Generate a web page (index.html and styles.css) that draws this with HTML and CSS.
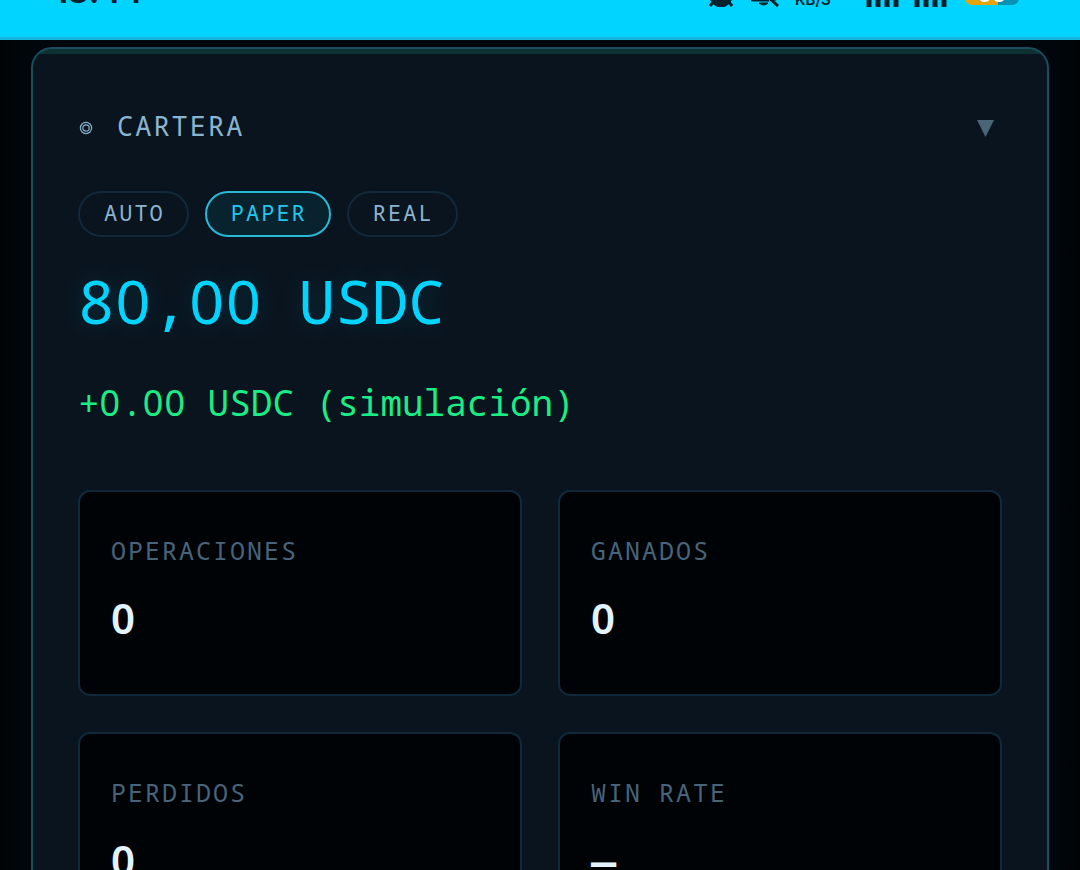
FILE: index.html
```html
<!DOCTYPE html>
<html lang="es">
<head>
<meta charset="utf-8">
<title>Cartera</title>
<link rel="stylesheet" href="styles.css">
</head>
<body>
<div class="screen">
  <header class="status">
    <span class="clock">18:44</span>
    <div class="indicators">
      <svg class="alarm" width="26" height="28" viewBox="0 0 26 28"><circle cx="13" cy="17" r="11"/><path d="M6 22L2 27M20 22l4 5" stroke-width="3"/></svg>
      <svg class="muted" width="30" height="28" viewBox="0 0 30 28"><path d="M1 21h18" stroke-width="3"/><path d="M9 24h9q-4 4-9 0z"/><path d="M17 17l11 10M22 21l6-2" stroke-width="3"/></svg>
      <span class="rate">KB/S</span>
      <svg class="signal" width="34" height="28" viewBox="0 0 34 28"><path d="M4 16v12M13 12v16M22 8v20M31 4v24" stroke-width="5"/></svg>
      <svg class="signal" width="34" height="28" viewBox="0 0 34 28"><path d="M4 16v12M13 12v16M22 8v20M31 4v24" stroke-width="5"/></svg>
      <span class="battery"><span class="level">60</span></span>
    </div>
  </header>
  <main class="page">
    <section class="card">
      <div class="card-head">
        <svg class="target" width="14" height="14" viewBox="0 0 14 14"><circle cx="7" cy="7" r="5.6"/><circle cx="7" cy="7" r="3.2"/></svg>
        <h1 class="title">CARTERA</h1>
        <button class="toggle" aria-label="Contraer">
          <svg width="17" height="17" viewBox="0 0 17 17"><path d="M0 0h17L8.500 17z"/></svg>
        </button>
      </div>
      <div class="modes">
        <button class="mode">AUTO</button>
        <button class="mode active">PAPER</button>
        <button class="mode">REAL</button>
      </div>
      <div class="balance">8<span class="zero">0</span>,<span class="zero">0</span><span class="zero">0</span> USDC</div>
      <div class="change">+<span class="zero">0</span>.<span class="zero">0</span><span class="zero">0</span> USDC (simulación)</div>
      <div class="stats">
        <div class="stat"><div class="label">OPERACIONES</div><div class="value"><span class="zero">0</span></div></div>
        <div class="stat"><div class="label">GANADOS</div><div class="value"><span class="zero">0</span></div></div>
        <div class="stat"><div class="label">PERDIDOS</div><div class="value"><span class="zero">0</span></div></div>
        <div class="stat"><div class="label">WIN RATE</div><div class="value">—</div></div>
      </div>
    </section>
  </main>
</div>
</body>
</html>
```
FILE: styles.css
```css
* { box-sizing: border-box; }
body {
  margin: 0;
  background: #000306;
  color: #e2f3ff;
  font-family: "Droid Sans Mono", "Noto Sans Mono", "Noto Sans Mono CJK SC", "DejaVu Sans Mono", monospace;
}
button { font: inherit; background: none; border: 0; padding: 0; }
svg { display: block; }
.screen { height: 100vh; overflow: hidden; }
.status {
  height: 40px;
  overflow: hidden;
  display: flex;
  justify-content: space-between;
  align-items: flex-start;
  padding: 0 61px 0 54px;
  background: #00d4ff;
  border-bottom: 3px solid #14b8dc;
  color: #04222e;
  font-family: Inter, Roboto, sans-serif;
}
.clock { margin-top: -26px; font-size: 32px; line-height: 36px; font-weight: 700; font-feature-settings: "calt" 0; }
.indicators { display: flex; align-items: flex-end; margin-top: -21px; height: 28px; }
.indicators svg { fill: #04222e; stroke: #04222e; }
.alarm { margin-right: 16px; }
.muted { margin-right: 15px; }
.rate { font-size: 15px; line-height: 14px; font-weight: 600; width: 70px; }
.signal { margin-right: 14px; }
.battery {
  width: 54px;
  height: 26px;
  margin: 0 0 2px 4px;
  border-radius: 7px;
  overflow: hidden;
  background: linear-gradient(90deg, #e5a50a 62%, #0891b2 62%);
}
.level { display: block; text-align: center; color: #fff; font-size: 22px; line-height: 30px; font-weight: 700; }
.page { padding: 7px 31px; background: linear-gradient(90deg, #000306, #00070c 3%, #00070c 97%, #000306); }
.card {
  padding: 60px 45px 45px;
  border: 2px solid #1a4e5e;
  border-radius: 21px;
  background: linear-gradient(#0c3233 5px, #0a141e 5px);
}
.card-head { display: flex; align-items: center; height: 34px; padding-right: 8px; }
.target { fill: none; stroke: #8ab4d0; stroke-width: 1.2; margin: 4px 24px 0 1px; }
.title { margin: 0; flex: 1; font-size: 27px; line-height: 34px; font-weight: 400; letter-spacing: 2px; color: #8ab4d0; }
.toggle svg { fill: #4a6478; }
.toggle { margin-top: 4px; }
.modes { display: flex; gap: 16px; margin-top: 48px; }
.mode {
  height: 46px;
  padding: 0 22px 4px 24px;
  border: 2px solid #11293a;
  border-radius: 23px;
  font-size: 22px;
  line-height: 30px;
  letter-spacing: 2px;
  color: #8ab4d0;
}
.mode.active { color: #22c8ee; border-color: #28b8d8; background: #08232e; }
.zero { font-family: "Noto Sans", sans-serif; }
.balance { margin-top: 23px; font-size: 61px; line-height: 82px; color: #00d4ff; text-shadow: 0 0 24px rgba(0, 212, 255, .2); }
.balance .zero { padding: 0 1px; }
.change { margin-top: 37px; font-size: 36px; line-height: 48px; color: #1aed86; }
.change .zero { padding-right: 1px; }
.stats { display: grid; grid-template-columns: 1fr 1fr; gap: 36px; margin-top: 63px; }
.stat { height: 206px; padding: 41px 31px; border: 2px solid #10293a; border-radius: 12px; background: #000306; }
.label { font-size: 25px; line-height: 34px; letter-spacing: 2px; color: #48647a; }
.value { margin-top: 23px; font-size: 42px; line-height: 56px; font-weight: 600; }
```
